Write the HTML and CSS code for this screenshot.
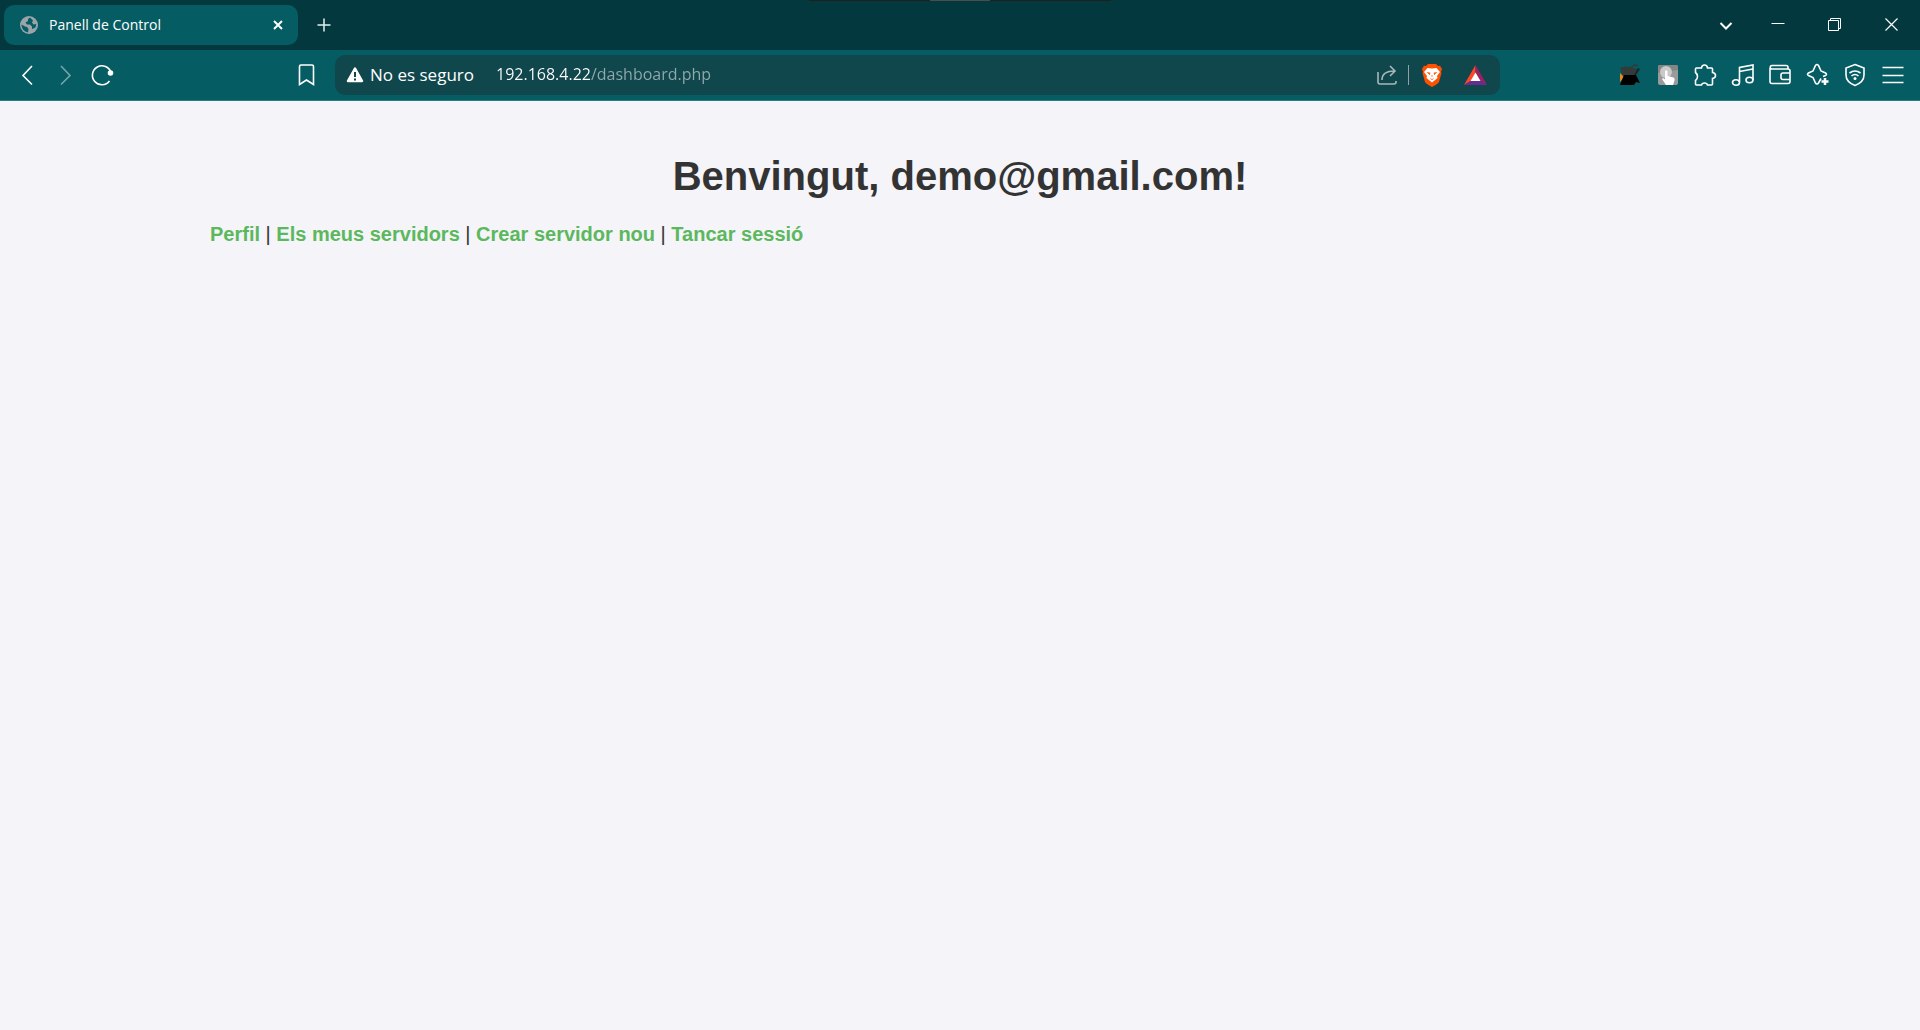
FILE: index.html
```html
<!DOCTYPE html>
<html lang="ca">
<head>
<meta charset="utf-8">
<meta name="viewport" content="width=device-width, initial-scale=1">
<title>Panell de Control</title>
<link rel="stylesheet" href="styles.css">
</head>
<body>
<header class="browser">
  <div class="grip"><span class="grip-handle"></span></div>
  <div class="tab-strip">
    <div class="tab">
      <svg class="favicon" viewBox="0 0 18 18" aria-hidden="true"><circle cx="9" cy="9" r="9" fill="#9aa5aa"/><path d="M10 1.500 8 3v2L5.500 6.500 7 8.500h3l2 2v2.500l3.500-1.500.8-3.500-2.800.5-1.500-2 1-2zM1.500 8.500 5 10.500l2 .5 1.500 2-.5 3.500A7.500 7.500 0 0 1 1.500 8.500z" fill="#055c62"/></svg>
      <span class="tab-title">Panell de Control</span>
      <button class="tab-close" type="button" aria-label="Tancar pestanya"><svg viewBox="0 0 12 12"><path d="m2 2 8 8M10 2l-8 8" stroke="#fff" stroke-width="2" fill="none"/></svg></button>
    </div>
    <button class="new-tab" type="button" aria-label="Pestanya nova"><svg viewBox="0 0 14 14"><path d="M7 .5v13M.5 7h13" stroke="#e6eff0" stroke-width="1.500" fill="none"/></svg></button>
    <div class="window-controls">
      <button type="button" aria-label="Cercar pestanyes"><svg viewBox="0 0 14 14"><path d="m1.500 5 5.500 5.500L12.500 5" stroke="#fff" stroke-width="2" fill="none"/></svg></button>
      <button type="button" aria-label="Minimitzar"><svg viewBox="0 0 14 14"><path d="M.5 5.500h13" stroke="#fff" fill="none"/></svg></button>
      <button type="button" aria-label="Restaurar"><svg viewBox="0 0 14 14"><path d="M.5 2.500h10v10H.5zM2.500 2.500v-2h10v10h-2" stroke="#fff" fill="none"/></svg></button>
      <button type="button" aria-label="Tancar"><svg viewBox="0 0 14 14"><path d="m.5.5 12 12M12.500.5l-12 12" stroke="#fff" stroke-width="1.200" fill="none"/></svg></button>
    </div>
  </div>
  <div class="toolbar">
    <div class="tools tools-nav">
      <button type="button" aria-label="Enrere"><svg viewBox="0 0 24 24"><path d="m16 3-9 9.500 9 9" /></svg></button>
      <button class="dim" type="button" aria-label="Endavant"><svg viewBox="0 0 24 24"><path d="m8 3 9 9.500-9 9"/></svg></button>
      <button type="button" aria-label="Recarregar"><svg viewBox="0 0 24 24"><path d="M21 9.500A9.500 9.500 0 1 0 19.500 18"/><circle cx="20.500" cy="10" r="2" fill="#fff"/></svg></button>
      <button class="bookmark" type="button" aria-label="Marcador"><svg viewBox="0 0 24 24"><path d="M4.500 3.500A1.500 1.500 0 0 1 6 2h11a1.500 1.500 0 0 1 1.500 1.500v18l-7-4.500-7 4.500z"/></svg></button>
    </div>
    <div class="address">
      <button class="security" type="button"><svg viewBox="0 0 18 16"><path d="M9 1.500 16 14H2z" fill="#fff" stroke="#fff" stroke-width="2.500" stroke-linejoin="round"/><path d="M9 5v5M9 11.500v2" stroke="#10474d" stroke-width="2" fill="none"/></svg><span>No es seguro</span></button>
      <input class="url" type="text" aria-label="Adreça" value="192.168.4.22/dashboard.php" spellcheck="false">
      <button class="share" type="button" aria-label="Compartir"><svg viewBox="0 0 20 20"><path d="M1 7v10a2 2 0 0 0 2 2h14a2 2 0 0 0 2-2v-1M5 15C5 9 9 6 17.500 6M13 1l5 5-5 5"/></svg></button>
      <span class="divider"></span>
      <button class="brave" type="button" aria-label="Escuts de Brave"><svg viewBox="0 0 20 23"><path d="M6 0h8l2 2 2-.2L20 5l-1 3 .5 1-2.500 9q-1 2-7 5-6-3-7-5L.5 9 1 8 0 5l2-3.200L4 2z" fill="#ff5000"/><path d="M5.500 4 10 4.500 14.500 4 18 8l-3 4 .5 2-3 2.500L10 18.500 7.500 16.500l-3-2.500.5-2-3-4z" fill="#fff"/><path d="m4.500 8 4 .8-.8 2.200zM15.500 8l-4 .8.800 2.200zM7.500 14l2.500 1 2.500-1-2.500 2zM9 11.500h2l-1 1.500z" fill="#ff5000"/></svg></button>
      <button class="bat" type="button" aria-label="Brave Rewards"><svg viewBox="0 0 23 20"><path d="M11.500 0 0 20l7-4 4.500-8z" fill="#ff4724"/><path d="M11.500 0 23 20l-7-4-4.500-8z" fill="#9e1f63"/><path d="M0 20h23l-7-4.500H7z" fill="#662d91"/><path d="m11.500 7.500 5 8.500h-10z" fill="#fff"/></svg></button>
    </div>
    <div class="tools tools-ext">
      <button type="button" aria-label="Extensió fosca"><svg viewBox="0 0 24 24" class="solid"><path d="M2 10v9l4-5z" fill="#e58a1b"/><path d="m2 5 4-1 14 2-3 7H5z" fill="#343a3a"/><path d="M6 4q8 2 9-1 2-2 5 0" stroke="#343a3a" stroke-width="1.500" fill="none"/><path d="M6 12h12l4 8-4-1-2 3H2z" fill="#000"/><path d="m18 12 4-6-2-1-4 7z" fill="#1b2426"/></svg></button>
      <button type="button" aria-label="Extensió de clic"><svg viewBox="0 0 24 24" class="solid"><rect x="2" y="2" width="20" height="20" rx="2" fill="#9a9a9a"/><path d="M2 10V4q0-2 2-2h16q2 0 2 2v3z" fill="#858585"/><circle cx="10" cy="9" r="6" fill="#c9c9c9"/><path d="M9 8q1.500-1.500 2.500 0v5l6 1.500q1.500.5 1 3L17 22h-7l-4-6q1-1.500 3 .5z" fill="#fff"/></svg></button>
      <button type="button" aria-label="Extensions"><svg viewBox="0 0 24 24"><path d="M3.500 5h5q.3-3 3-3t3 3h4q1 0 1 1v3.500q3 .5 3 3t-3 3V21q0 1-1 1h-4q-.5-2-3-2t-3 2h-5q-1 0-1-1v-3.500q2-1.500 2-4t-2-4V6q0-1 1-1z"/></svg></button>
      <button type="button" aria-label="Música"><svg viewBox="0 0 24 24"><path d="M8.500 19V4.500L22 2v15M8.500 8.500 22 6"/><ellipse cx="5" cy="19.500" rx="3.500" ry="2.700"/><ellipse cx="18.500" cy="17" rx="3.500" ry="2.700"/></svg></button>
      <button type="button" aria-label="Cartera"><svg viewBox="0 0 24 24"><path d="M2 5v13.500A2 2 0 0 0 4 20.500h16a2 2 0 0 0 2-2V8a2 2 0 0 0-2-2H4a1.700 1.700 0 0 1 0-3.500h14a2 2 0 0 1 2 2V6M22 10h-7a2 2 0 0 0-2 2v2.500a2 2 0 0 0 2 2h7"/></svg></button>
      <button type="button" aria-label="Assistent"><svg viewBox="0 0 24 24"><path d="M15 15.500 12.500 20q-1.500 2-3 0L7 14.500 2.500 12.500q-2-1.200 0-2.500L7 8l2.500-5.500q1.500-2 3 0L15 8l4.500 2q2 1.300 0 2.500L17 13.500"/><path d="M19 15v7M15.500 18.500h7" stroke-width="2.500"/></svg></button>
      <button type="button" aria-label="VPN"><svg viewBox="0 0 24 24"><path d="m12 1.500 9 3.500v7q0 7-9 10.500Q3 19 3 12V5zM6.500 10q5.500-4 11 0M8.500 13q3.500-3 7 0"/><circle cx="12" cy="15.500" r="1.500" fill="#fff" stroke="none"/></svg></button>
      <button type="button" aria-label="Menú"><svg viewBox="0 0 24 24"><path d="M1.500 4.500h21M1.500 12.500h21M1.500 19.500h21"/></svg></button>
    </div>
  </div>
</header>
<main class="page">
  <h1>Benvingut, demo@gmail.com!</h1>
  <nav><a href="#perfil">Perfil</a> | <a href="#servidors">Els meus servidors</a> | <a href="#crear">Crear servidor nou</a> | <a href="#sortir">Tancar sessió</a></nav>
</main>
</body>
</html>
```
FILE: styles.css
```css
* { box-sizing: border-box; }

body {
  margin: 0;
  background: #f4f4f9;
  color: #333;
  font-family: Arial, "Liberation Sans", sans-serif;
  font-size: 20px;
}

button {
  display: flex;
  align-items: center;
  justify-content: center;
  padding: 0;
  border: 0;
  background: none;
  color: #fff;
  font: inherit;
  cursor: pointer;
}

svg { display: block; flex: none; }

.browser {
  position: relative;
  font-family: "Segoe UI", "Open Sans", sans-serif;
  color: #fff;
}

/* Grab bar laid over the top edge of the window */
.grip {
  position: absolute;
  top: 0;
  left: 50%;
  display: flex;
  justify-content: center;
  width: 302px;
  height: 1px;
  background: #202020;
  transform: translateX(-50%);
}

.grip-handle { width: 60px; background: #4d4d4d; }

.tab-strip {
  display: flex;
  align-items: center;
  height: 50px;
  padding-left: 4px;
  background: #03393e;
}

.tab {
  display: flex;
  align-items: center;
  gap: 11px;
  width: 294px;
  height: 40px;
  padding: 0 14px 0 16px;
  border-radius: 10px;
  background: #055c62;
}

.favicon { width: 18px; height: 18px; }
.tab-title { flex: 1; padding-bottom: 2px; font-size: 14px; }
.tab-close svg { width: 12px; height: 12px; }
.new-tab { width: 52px; height: 40px; }
.new-tab svg { width: 14px; height: 14px; }

.window-controls { display: flex; margin-left: auto; }
.window-controls button { width: 57px; height: 50px; }
.window-controls button:first-child { width: 46px; }
.window-controls svg { width: 14px; height: 14px; }

.toolbar {
  display: flex;
  align-items: center;
  height: 51px;
  border-bottom: 1px solid #2f7a80;
  background: #055c62;
}

.tools { display: flex; align-items: center; }
.tools svg {
  width: 24px;
  height: 24px;
  fill: none;
  stroke: #fff;
  stroke-width: 1.6;
}
.tools .solid { stroke: none; }

.tools-nav { width: 335px; padding-left: 9px; }
.tools-nav button { width: 37px; height: 40px; }
.tools-nav .dim { opacity: 0.45; }
.tools-nav .bookmark { margin: 0 10px 0 auto; }

.tools-ext { justify-content: space-between; width: 420px; padding: 0 15px 0 118px; }

.address {
  display: flex;
  flex: 1;
  align-items: center;
  min-width: 0;
  height: 40px;
  padding: 0 13px 0 11px;
  border-radius: 10px;
  background: #10474d;
  font-size: 17px;
}

.security { gap: 6px; }
.security svg { width: 18px; height: 16px; }
.security span { padding-bottom: 2px; }

.url {
  flex: 1;
  min-width: 0;
  margin-left: 22px;
  padding: 0 0 2px;
  border: 0;
  outline: 0;
  /* Host in white, path in a muted tone */
  background: linear-gradient(90deg, #fff 94px, #91aaac 94px);
  background-clip: text;
  -webkit-background-clip: text;
  color: transparent;
  font: inherit;
  font-size: 16px;
}

.share svg { width: 20px; height: 20px; fill: none; stroke: #a6b8ba; stroke-width: 1.6; }
.divider { width: 1px; height: 20px; margin: 0 13px 0 11px; background: #8ca3a6; }
.brave svg { width: 20px; height: 23px; }
.bat { margin-left: 22px; }
.bat svg { width: 23px; height: 20px; }

.page {
  max-width: 1540px;
  margin: 0 auto;
  padding: 51px 20px;
}

h1 {
  margin: 0 0 22px;
  font-size: 40px;
  line-height: 48px;
  text-align: center;
}

nav { line-height: 24px; }
nav a { color: #5cb85c; font-weight: bold; text-decoration: none; }
nav a:hover { text-decoration: underline; }
```
